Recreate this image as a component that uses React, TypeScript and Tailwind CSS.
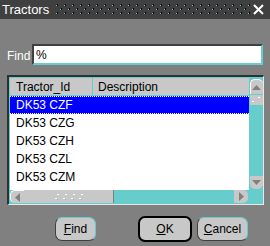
import React from "react";

const font = { fontFamily: '"Liberation Sans", Arial, sans-serif' };

function Dots() {
  return (
    <svg width="194" height="12" className="block" shapeRendering="crispEdges">
      <defs>
        <pattern id="dp" width="8" height="8" patternUnits="userSpaceOnUse">
          <rect x="0" y="1" width="1" height="1" fill="#66cccc" />
          <rect x="1" y="0" width="1" height="1" fill="#000" />
          <rect x="1" y="1" width="1" height="1" fill="#000" />
          <rect x="4" y="5" width="1" height="1" fill="#66cccc" />
          <rect x="5" y="4" width="1" height="1" fill="#000" />
          <rect x="5" y="5" width="1" height="1" fill="#000" />
        </pattern>
      </defs>
      <rect x="0" y="0" width="194" height="12" fill="url(#dp)" />
    </svg>
  );
}

function Btn({ first, rest, def, w }: { first: string; rest: string; def?: boolean; w: string }) {
  return (
    <div
      className={`${w} flex items-center justify-center rounded-[7px] bg-[#c8c8c8] text-[12px] text-black ${
        def
          ? "h-[26px] border-2 border-black"
          : "h-[24px] border border-t-[#66cccc] border-r-[#66cccc] border-b-[#404040] border-l-[#404040]"
      }`}
    >
      <span>
        <span className="underline">{first}</span>
        {rest}
      </span>
    </div>
  );
}

const rows = ["DK53 CZF", "DK53 CZG", "DK53 CZH", "DK53 CZL", "DK53 CZM"];

export default function App() {
  return (
    <div className="w-[270px] h-[246px] bg-[#808080] flex flex-col overflow-hidden" style={font}>
      {/* title */}
      <div className="h-[19px] bg-[#404040] flex items-center">
        <span className="pl-[2px] text-white text-[13px] leading-none">Tractors</span>
        <div className="ml-[7px] mt-[1px]">
          <Dots />
        </div>
        <svg width="11" height="11" className="ml-[3px]" viewBox="0 0 11 11">
          <path d="M1 1 L10 10 M10 1 L1 10" stroke="#fff" strokeWidth="2" />
        </svg>
      </div>

      {/* find row */}
      <div className="flex items-center mt-[25px] pl-[7px]">
        <span className="text-white text-[12px] w-[25px] pt-[2px]">Find</span>
        <div className="w-[231px] h-[21px] bg-white border-t-2 border-l-2 border-t-[#404040] border-l-[#404040] border-r-2 border-b-2 border-r-[#66cccc] border-b-[#66cccc] flex items-center pl-[2px] text-[12px] text-black">
          %
        </div>
      </div>

      {/* table panel */}
      <div className="mt-[10px] ml-[7px] w-[257px] h-[130px] border-t-2 border-l-2 border-t-[#303030] border-l-[#303030] border-r border-b border-r-[#e8e8e8] border-b-[#e8e8e8] bg-[#66cccc] flex flex-col">
        <div className="flex flex-1 pl-[1px] pt-[1px]">
          <div className="w-[239px] flex flex-col bg-white">
            <div className="h-[18px] bg-[#c8c8c8] flex text-[12px] text-black border-b border-[#66cccc]">
              <div className="w-[83px] pl-[6px] flex items-center border-r border-[#66cccc]">Tractor_Id</div>
              <div className="flex-1 pl-[5px] flex items-center">Description</div>
            </div>
            {rows.map((r, i) => (
              <div
                key={r}
                className={`h-[18px] flex items-center pl-[6px] text-[12px] ${
                  i === 0 ? "bg-[#0000ff] text-white border-y border-dotted border-white" : "text-black"
                }`}
              >
                {r}
              </div>
            ))}
          </div>
          {/* vertical scrollbar */}
          <div className="w-[14px] flex flex-col items-center pt-[1px]">
            <div className="w-[13px] h-[15px] bg-[#c8c8c8] rounded-t-[5px] border-t border-l border-white flex items-center justify-center">
              <svg width="9" height="5"><path d="M0 5 L4.5 0 L9 5 Z" fill="#808080" /></svg>
            </div>
            <div className="w-[13px] h-[10px] mt-[1px] bg-[#c8c8c8] relative">
              <div className="absolute left-[2px] top-[6px] w-[2px] h-[1px] bg-white" />
              <div className="absolute left-[8px] top-[2px] w-[2px] h-[1px] bg-white" />
            </div>
            <div className="flex-1" />
            <div className="w-[13px] h-[13px] bg-[#c8c8c8] rounded-b-[5px] flex items-center justify-center mb-[1px]">
              <svg width="9" height="5"><path d="M0 0 L4.5 5 L9 0 Z" fill="#808080" /></svg>
            </div>
          </div>
        </div>
        {/* horizontal scrollbar */}
        <div className="h-[14px] flex items-center pl-[1px] pb-[1px]">
          <div className="w-[14px] h-[13px] bg-[#c8c8c8] rounded-l-[5px] border-l border-t border-white flex items-center justify-center">
            <svg width="5" height="9"><path d="M5 0 L0 4.5 L5 9 Z" fill="#808080" /></svg>
          </div>
          <div className="w-[90px] h-[13px] bg-[#c8c8c8] border-r border-[#808080] flex items-center justify-center">
            <svg width="28" height="8">
              {[0, 8, 16, 24].map((x) => (
                <g key={x}>
                  <rect x={x + 2} y="1" width="2" height="1" fill="#fff" />
                  <rect x={x} y="5" width="2" height="1" fill="#fff" />
                  <rect x={x + 2} y="6" width="1" height="1" fill="#66cccc" />
                </g>
              ))}
            </svg>
          </div>
          <div className="w-[120px]" />
          <div className="w-[14px] h-[13px] bg-[#c8c8c8] rounded-r-[5px] flex items-center justify-center">
            <svg width="5" height="9"><path d="M0 0 L5 4.5 L0 9 Z" fill="#808080" /></svg>
          </div>
        </div>
      </div>

      {/* buttons */}
      <div className="flex items-center mt-[11px] h-[26px]">
        <div className="ml-[55px]">
          <Btn first="F" rest="ind" w="w-[41px]" />
        </div>
        <div className="ml-[42px]">
          <Btn first="O" rest="K" def w="w-[54px]" />
        </div>
        <div className="ml-[5px]">
          <Btn first="C" rest="ancel" w="w-[51px]" />
        </div>
      </div>
    </div>
  );
}
